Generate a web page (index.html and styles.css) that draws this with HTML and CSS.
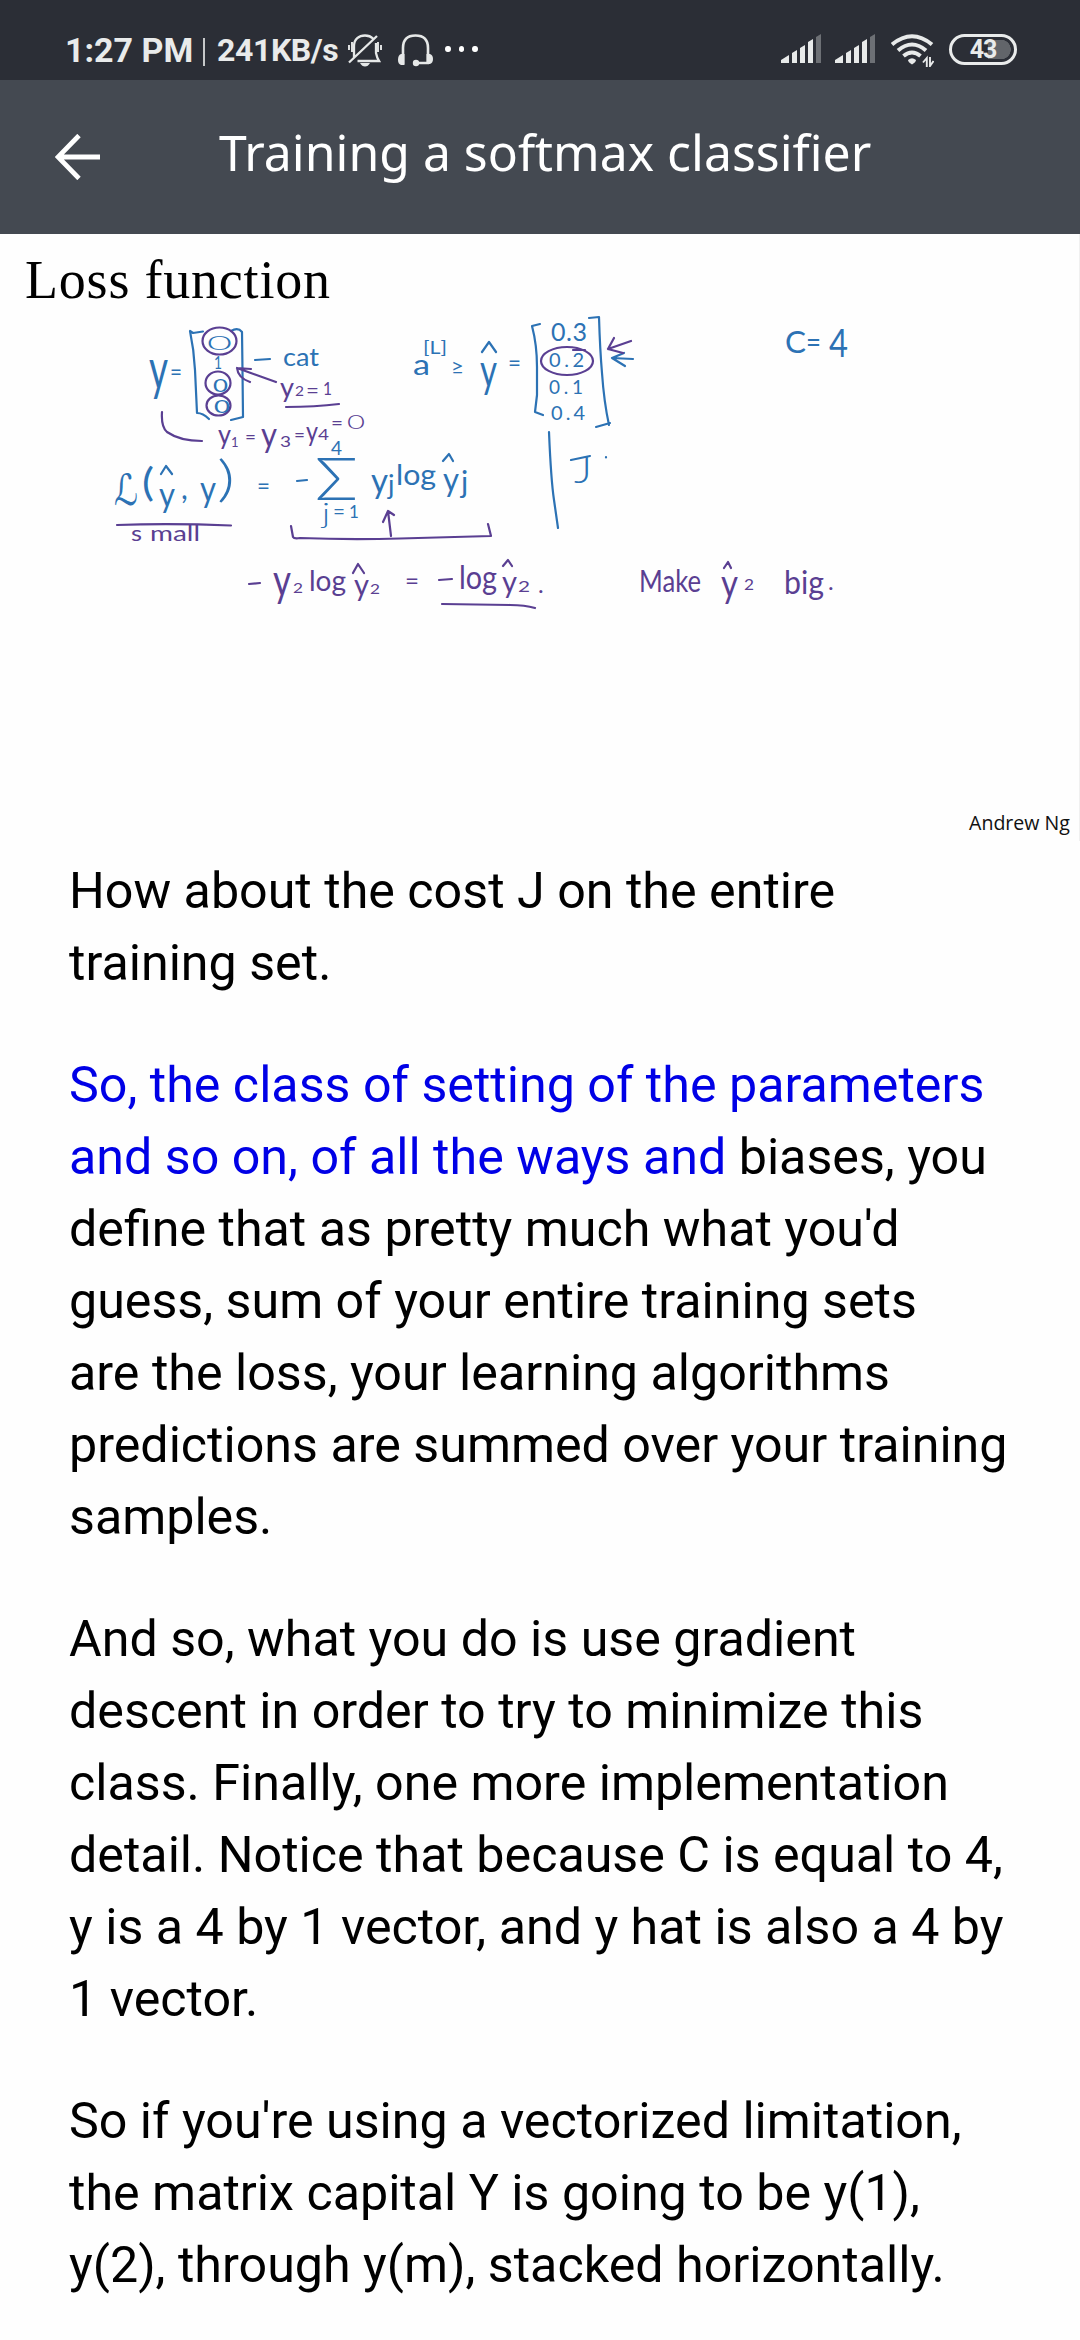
FILE: index.html
```html
<!DOCTYPE html>
<html lang="en">
<head>
<meta charset="utf-8">
<title>Training a softmax classifier</title>
<link rel="stylesheet" href="styles.css">
</head>
<body>
<div class="status">
  <span class="clock">1:27 PM</span><span class="divider"></span><span class="speed">241KB/s</span>
  <svg class="bell" width="36" height="34" viewBox="347 33 36 34">
    <g fill="none" stroke="#e6e8e8" stroke-width="2.3">
      <path d="M354 58V46C354 39 359 35.500 365 35.500C368 35.500 371 36.500 373 38.500M376 43V53Q377 58 379 61H357.500M349 62.500L377 36"/>
      <path d="M349 45V50M352 42V52M378 42V52M381 45V50" stroke-width="1.900"/>
    </g>
    <path d="M360 63H370Q368 66.500 365 66.500Q362 66.500 360 63Z" fill="#e6e8e8"/>
  </svg>
  <svg class="headset" width="36" height="34" viewBox="397 33 36 34">
    <path d="M403 64V48Q403 35.500 415.500 35.500Q428 35.500 428 48V64M416 63H429" fill="none" stroke="#e6e8e8" stroke-width="2.600"/>
    <path d="M404.500 54V65H401Q398 64 398 60Q398 55 401 54ZM426.500 54V64H430Q433 63 433 59Q433 55 430 54Z" fill="#e6e8e8"/><circle cx="416" cy="63" r="3.200" fill="#e6e8e8"/>
  </svg>
  <span class="dots"><i></i><i></i><i></i></span>
  <span class="space"></span>
  <svg class="signal" width="40" height="30" viewBox="0 0 40 30"><g fill="#e8eaea"><path d="M0 29V26L8 21V29ZM11 29V19L16 16V29ZM19 29V14L24 11V29ZM27 29V8L32 5V29Z"/><path d="M35 29V3L40 0V29Z" opacity=".35"/></g></svg>
  <svg class="signal" width="40" height="30" viewBox="0 0 40 30"><g fill="#e8eaea"><path d="M0 29V26L8 21V29ZM11 29V19L16 16V29ZM19 29V14L24 11V29ZM27 29V8L32 5V29Z"/><path d="M35 29V3L40 0V29Z" opacity=".35"/></g></svg>
  <svg class="wifi" width="43" height="34" viewBox="890 33 43 34">
    <g fill="none" stroke="#e8eaea" stroke-width="4"><path d="M891 44.500Q911 28 931 44.500M897 50.500Q911 38.500 925 50.500M902.500 56Q911 49 919.500 56"/></g>
    <path d="M907 60Q911 56.500 915 60Q915 62 911 64.500Q907 62 907 60Z" fill="#e8eaea"/><path d="M925.800 67V58L922 62.500M929 57V66L932.500 61" fill="none" stroke="#e8eaea" stroke-width="1.900"/>
  </svg>
  <span class="battery"><b>43</b></span>
</div>
<header class="appbar">
  <svg class="back" width="46" height="46" viewBox="0 0 46 46"><path d="M45 23H4M24 1.500L3 23L24 44.500" fill="none" stroke="#fff" stroke-width="4.800"/></svg>
  <h1>Training a softmax classifier</h1>
</header>
<svg class="slide" width="1080" height="607" viewBox="0 234 1080 607">
  <text class="heading" x="25" y="298" font-size="54" textLength="305">Loss function</text>
  <path d="M1079.500 234V841" stroke="#f0f0f0"/>

  <!-- blue ink: brackets, hats and rules -->
  <g class="ink blue">
    <path d="M203 331.500L193 333L190 331Q194 350 195 370L197 413Q203 413 209 419M231 331Q238 327 242 332L242.500 371L243 417L231 420"/>
    <path d="M255 360L270 359M297 481L307 480M161 474L166 466L172 474M443 461L449 454L453 461M482 352L489 342L496 352"/>
    <path d="M540 324L532 326Q537 345 537 367L537 395L535 412L543 415M589 318L599 317Q600 350 602 373Q604 402 609 425M610 423L596 427"/>
    <path d="M633 359L612 358M624 353L612 358L625 366M549 432Q551 480 554 500L558 528M571 460L590 456M606 457V457.500"/>
  </g>
  <!-- purple ink: circles, arrows and underlines -->
  <g class="ink purple">
    <ellipse cx="219.500" cy="341" rx="17" ry="13.500"/><ellipse cx="218" cy="383" rx="12.500" ry="11.500"/><ellipse cx="218.500" cy="405.500" rx="12" ry="10"/>
    <ellipse cx="567" cy="361" rx="26" ry="14"/>
    <path d="M276 382L237 368M251 369L237 368Q238 378 250 382M286 407Q315 407 339 404M162 412Q161 427 167 432Q180 441 202 441"/>
    <path d="M117 525Q170 523 231 525.500M291 526L293 537Q294 539 300 538Q350 540 400 538.500L491 536L488 524M391 536L388 511M383 522L388 511L394 515"/>
    <path d="M573 350H585M631 341L608 349M614 338L608 349L623 353M249 584L260 583M439 580L452 579M442 604L510 605Q525 605 535 608"/>
    <path d="M353 573L358 564L364 573M503 566L508 560L512 566M724 568L728 562L731 568"/>
  </g>

  <g class="hand blue-text">
    <text x="149" y="389" font-size="56" textLength="19" lengthAdjust="spacingAndGlyphs">y</text>
    <text x="170" y="380" font-size="24" textLength="12" lengthAdjust="spacingAndGlyphs">=</text>
    <text class="light" x="207" y="349.500" font-size="20" textLength="25" lengthAdjust="spacingAndGlyphs">0</text>
    <text x="214" y="369" font-size="18" textLength="8" lengthAdjust="spacingAndGlyphs">1</text>
    <text x="213" y="392" font-size="17" textLength="15" lengthAdjust="spacingAndGlyphs">0</text>
    <text x="214" y="413" font-size="17" textLength="16" lengthAdjust="spacingAndGlyphs">0</text>
    <text x="283" y="366" font-size="25" textLength="36" lengthAdjust="spacingAndGlyphs">cat</text>
    <text x="331" y="455" font-size="19" textLength="11" lengthAdjust="spacingAndGlyphs">4</text>
    <text class="script" x="114" y="505" font-size="43" textLength="24" lengthAdjust="spacingAndGlyphs">ℒ</text>
    <text x="142" y="496" font-size="38" textLength="12" lengthAdjust="spacingAndGlyphs">(</text>
    <text x="159" y="507" font-size="35" textLength="16" lengthAdjust="spacingAndGlyphs">y</text>
    <text x="181" y="499" font-size="30">,</text>
    <text x="200" y="502" font-size="37" textLength="16" lengthAdjust="spacingAndGlyphs">y</text>
    <text class="light" x="217" y="496" font-size="50" textLength="18" lengthAdjust="spacingAndGlyphs">)</text>
    <text x="257" y="494" font-size="24" textLength="13" lengthAdjust="spacingAndGlyphs">=</text>
    <text class="light" x="315" y="500" font-size="60" textLength="43" lengthAdjust="spacingAndGlyphs">Σ</text>
    <text class="light" x="322" y="523" font-size="28" textLength="8" lengthAdjust="spacingAndGlyphs">j</text>
    <text x="333" y="519" font-size="22" textLength="12" lengthAdjust="spacingAndGlyphs">=</text>
    <text x="349" y="518" font-size="17">1</text>
    <text x="371" y="493" font-size="35" textLength="17" lengthAdjust="spacingAndGlyphs">y</text>
    <text x="388" y="494" font-size="27">j</text>
    <text x="396" y="485" font-size="29" textLength="40" lengthAdjust="spacingAndGlyphs">log</text>
    <text x="443" y="491" font-size="32" textLength="16" lengthAdjust="spacingAndGlyphs">y</text>
    <text x="461" y="493" font-size="30">j</text>
    <text x="413" y="375" font-size="29" textLength="17" lengthAdjust="spacingAndGlyphs">a</text>
    <text x="423" y="354" font-size="17" textLength="24" lengthAdjust="spacingAndGlyphs">[L]</text>
    <text x="451" y="374" font-size="21" textLength="13" lengthAdjust="spacingAndGlyphs">≥</text>
    <text x="480" y="387" font-size="47" textLength="17" lengthAdjust="spacingAndGlyphs">y</text>
    <text x="508" y="371" font-size="24" textLength="13" lengthAdjust="spacingAndGlyphs">=</text>
    <text x="551" y="341" font-size="25" textLength="36">0.3</text>
    <text x="549" y="367" font-size="20" textLength="35">0.2</text>
    <text x="549" y="394" font-size="19" textLength="34">0.1</text>
    <text x="551" y="419.500" font-size="20" textLength="34">0.4</text>
    <text class="light" x="574" y="483" font-size="37" textLength="18" lengthAdjust="spacingAndGlyphs">J</text>
    <text x="785" y="353" font-size="31" textLength="21" lengthAdjust="spacingAndGlyphs">C</text>
    <text x="806" y="352" font-size="28" textLength="15" lengthAdjust="spacingAndGlyphs">=</text>
    <text x="829" y="357" font-size="38" textLength="19" lengthAdjust="spacingAndGlyphs">4</text>
  </g>
  <g class="hand purple-text">
    <text x="280" y="397" font-size="27" textLength="14" lengthAdjust="spacingAndGlyphs">y</text>
    <text x="295" y="396" font-size="13" textLength="9" lengthAdjust="spacingAndGlyphs">2</text>
    <text x="306" y="398" font-size="22" textLength="13" lengthAdjust="spacingAndGlyphs">=</text>
    <text x="323" y="395" font-size="18" textLength="9" lengthAdjust="spacingAndGlyphs">1</text>
    <text x="218" y="444" font-size="26" textLength="13" lengthAdjust="spacingAndGlyphs">y</text>
    <text x="231" y="447" font-size="13">1</text>
    <text x="245" y="444" font-size="20" textLength="11" lengthAdjust="spacingAndGlyphs">=</text>
    <text x="261" y="447" font-size="34" textLength="16" lengthAdjust="spacingAndGlyphs">y</text>
    <text x="280" y="447" font-size="15" textLength="11" lengthAdjust="spacingAndGlyphs">3</text>
    <text x="294" y="442" font-size="20" textLength="11" lengthAdjust="spacingAndGlyphs">=</text>
    <text x="306" y="441" font-size="27" textLength="12" lengthAdjust="spacingAndGlyphs">y</text>
    <text x="318" y="440" font-size="15" textLength="11" lengthAdjust="spacingAndGlyphs">4</text>
    <text x="331" y="429" font-size="18" textLength="12" lengthAdjust="spacingAndGlyphs">=</text>
    <text class="light" x="347" y="429" font-size="20" textLength="18" lengthAdjust="spacingAndGlyphs">0</text>
    <text x="131" y="541" font-size="21" textLength="11" lengthAdjust="spacingAndGlyphs">s</text>
    <text x="150" y="541" font-size="21" textLength="50" lengthAdjust="spacingAndGlyphs">mall</text>
    <text x="273" y="596" font-size="45" textLength="18" lengthAdjust="spacingAndGlyphs">y</text>
    <text x="293" y="593" font-size="13" textLength="10" lengthAdjust="spacingAndGlyphs">2</text>
    <text x="309" y="591" font-size="29" textLength="37" lengthAdjust="spacingAndGlyphs">log</text>
    <text x="354" y="596" font-size="30" textLength="15" lengthAdjust="spacingAndGlyphs">y</text>
    <text x="370" y="594" font-size="14" textLength="10" lengthAdjust="spacingAndGlyphs">2</text>
    <text x="405" y="589" font-size="24" textLength="14" lengthAdjust="spacingAndGlyphs">=</text>
    <text x="459" y="589" font-size="32" textLength="38" lengthAdjust="spacingAndGlyphs">log</text>
    <text x="502" y="593" font-size="31" textLength="15" lengthAdjust="spacingAndGlyphs">y</text>
    <text x="518" y="592" font-size="15" textLength="12" lengthAdjust="spacingAndGlyphs">2</text>
    <text x="538" y="593" font-size="24">.</text>
    <text x="639" y="592" font-size="30" textLength="62" lengthAdjust="spacingAndGlyphs">Make</text>
    <text x="721" y="597" font-size="38" textLength="17" lengthAdjust="spacingAndGlyphs">y</text>
    <text x="744" y="590" font-size="16" textLength="10" lengthAdjust="spacingAndGlyphs">2</text>
    <text x="784" y="594" font-size="33" textLength="40" lengthAdjust="spacingAndGlyphs">big</text>
    <text x="828" y="590" font-size="24">.</text>
  </g>
  <text class="author" x="969" y="830" font-size="20" textLength="101" lengthAdjust="spacingAndGlyphs">Andrew Ng</text>
</svg>
<main class="transcript">
  <p>How about the cost J on the entire<br>training set.</p>
  <p><span class="spoken">So, the class of setting of the parameters<br>and so on, of all the ways and</span> biases, you<br>define that as pretty much what you'd<br>guess, sum of your entire training sets<br>are the loss, your learning algorithms<br>predictions are summed over your training<br>samples.</p>
  <p>And so, what you do is use gradient<br>descent in order to try to minimize this<br>class. Finally, one more implementation<br>detail. Notice that because C is equal to 4,<br>y is a 4 by 1 vector, and y hat is also a 4 by<br>1 vector.</p>
  <p>So if you're using a vectorized limitation,<br>the matrix capital Y is going to be y(1),<br>y(2), through y(m), stacked horizontally.</p>
</main>
</body>
</html>
```
FILE: styles.css
```css
* { box-sizing: border-box; }
body {
  margin: 0;
  width: 1080px;
  height: 2340px;
  overflow: hidden;
  background: #fefefe;
  font-family: Roboto, sans-serif;
  color: #000;
}
.status {
  display: flex;
  align-items: center;
  height: 80px;
  padding: 20px 63px 0 65px;
  background: #2b2e36;
  color: #e9ebeb;
  white-space: nowrap;
}
.status svg { flex: none; }
.clock { width: 127px; font-size: 34px; font-weight: 700; }
.divider { width: 2px; height: 28px; margin: 4px 12px 0 11px; background: #c6c8c9; }
.speed { width: 130px; font-size: 32px; font-weight: 700; letter-spacing: -.4px; }
.headset { margin-left: 14px; }
.dots { display: flex; gap: 8px; margin-left: 12px; margin-top: -2px; }
.dots i { width: 5.500px; height: 6px; border-radius: 50%; background: #fff; }
.space { flex: 1; }
.signal { margin-right: 14px; margin-top: -3px; }
.wifi { margin-left: 2px; margin-right: 15px; }
.battery {
  display: flex;
  align-items: center;
  justify-content: center;
  flex: none;
  width: 68px;
  height: 31px;
  margin-top: -2px;
  border: 3px solid #e9ebeb;
  border-radius: 16px;
  background: radial-gradient(circle at 0 50%, #62656a 9.5px, transparent 10px) 49px 3px / 12px 19px no-repeat,
    linear-gradient(#62656a, #62656a) 36px 3px / 13px 19px no-repeat;
}
.battery b { font-size: 25px; line-height: 25px; letter-spacing: -1px; }
.appbar {
  display: flex;
  align-items: center;
  height: 154px;
  padding-left: 55px;
  background: #444951;
  color: #fff;
}
.appbar h1 {
  margin: 0 0 10px 118px;
  font: 400 49.9px/68px "Noto Sans", "Open Sans", sans-serif;
  white-space: nowrap;
}
.slide { display: block; }
.heading { font-family: "Liberation Serif", serif; fill: #000; }
.author { font-family: "Open Sans", sans-serif; fill: #111; }
.ink { fill: none; stroke-width: 2.2; stroke-linecap: round; stroke-linejoin: round; }
.blue { stroke: #2c72b4; }
.purple { stroke: #5a3f92; }
.hand { font-family: Lato, sans-serif; }
.hand .script { font-family: "DejaVu Sans", serif; }
.hand .light { font-weight: 300; }
.blue-text { fill: #2c72b4; }
.purple-text { fill: #5a3f92; }
.transcript { padding: 14px 0 0 69px; font-size: 50.2px; line-height: 72px; white-space: nowrap; }
.transcript p { margin: 0 0 50px; }
.spoken { color: #0000e6; }
```
